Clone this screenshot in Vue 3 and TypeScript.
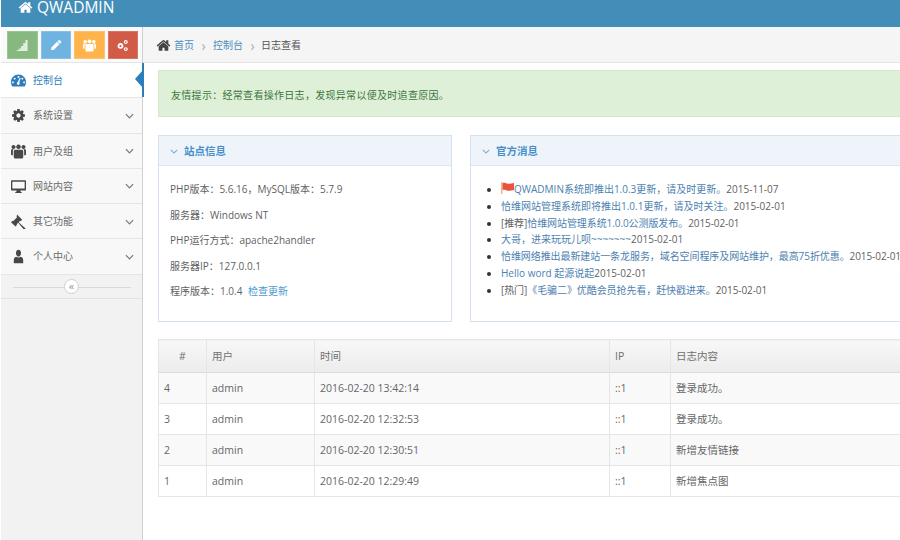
<script setup lang="ts">
// 图标路径（单一 path，靠 evenodd 挖空）
const icons: Record<string, string> = {
  home: 'M1472 992v480q0 26-19 45t-45 19h-384v-384h-256v384h-384q-26 0-45-19t-19-45v-480q0-1 .5-3t.5-3l575-474 575 474q1 2 1 6zm223-69l-62 74q-8 9-21 11h-3q-13 0-21-7l-692-577-692 577q-12 8-24 7-13-2-21-11l-62-74q-8-10-7-23.500t11-21.500l719-599q32-26 76-26t76 26l244 204v-195q0-14 9-23t23-9h192q14 0 23 9t9 23v408l219 182q10 8 11 21.500t-7 23.500z',
  dash: 'M896 190C400 190 0 590 0 1090c0 210 50 390 150 520h1492c100-130 150-310 150-520 0-500-400-900-896-900zM896 360a110 110 0 1 0 .1 0zM440 560a110 110 0 1 0 .1 0zM1352 560a110 110 0 1 0 .1 0zM230 1010a110 110 0 1 0 .1 0zM1562 1010a110 110 0 1 0 .1 0zM1160 640L980 1110a170 170 0 1 1-170-30l220-480z',
  cog: 'M1152 896q0-106-75-181t-181-75-181 75-75 181 75 181 181 75 181-75 75-181zm512-109v222q0 12-8 23t-20 13l-185 28q-19 54-39 91 35 50 107 138 10 12 10 25t-9 23q-27 37-99 108t-94 71q-12 0-26-9l-138-108q-44 23-91 38-16 136-29 186-7 28-36 28h-222q-14 0-24.500-8.500t-11.500-21.500l-28-184q-49-16-90-37l-141 107q-10 9-25 9-14 0-25-11-126-114-165-168-7-10-7-23 0-12 8-23 15-21 51-66.500t54-70.500q-27-50-41-99l-183-27q-13-2-21-12.500t-8-23.500v-222q0-12 8-23t19-13l186-28q14-46 39-92-40-57-107-138-10-12-10-24 0-10 9-23 26-36 98.500-107.500t94.500-71.500q13 0 26 10l138 107q44-23 91-38 16-136 29-186 7-28 36-28h222q14 0 24.500 8.500t11.500 21.500l28 184q49 16 90 37l142-107q9-9 24-9 13 0 25 10 129 119 165 170 7 8 7 22 0 12-8 23-15 21-51 66.500t-54 70.500q26 50 41 98l183 28q13 2 21 12.500t8 23.500z',
  users: 'M896 60a270 270 0 1 0 .1 0zM300 130a240 240 0 1 0 .1 0zM1492 130a240 240 0 1 0 .1 0zM500 680h792c110 0 170 90 170 220v640c0 100-60 190-170 190H500c-110 0-170-90-170-190V900c0-130 60-220 170-220zM0 870c0-160 70-260 190-260h120c-50 70-90 160-90 290v430H90c-50 0-90-40-90-90zM1792 870c0-160-70-260-190-260h-120c50 70 90 160 90 290v430h130c50 0 90-40 90-90z',
  desktop: 'M112 160h1568c60 0 112 50 112 110v1000c0 60-52 110-112 110h-560q0 90 64 180h96v112H512v-112h96q64-90 64-180H112c-60 0-112-50-112-110V270c0-60 52-110 112-110zM160 320v800h1472V320z',
  gavel: 'M720 60l620 620-190 190-60-60-180 180 800 700q40 40 0 90l-80 80q-50 40-90 0L860 1040l-190 190 60 60-190 190L0 1000l190-190 60 60 480-480-60-60z',
  user: 'M896 100c190 0 300 170 300 380s-120 430-300 430-300-220-300-430 110-380 300-380zM336 1690v-330c0-220 80-340 280-420 70 60 170 90 280 90s210-30 280-90c200 80 280 200 280 420v330z',
  signal: 'M100 1500h300v-200h300v-350h300V550h300V150h300v1500H100z',
  pencil: 'M1300 190q50-50 110-50t110 50l120 120q50 50 50 110t-50 110l-130 130-340-340zM1100 390l340 340-800 800H300v-340z',
  cogs: 'M620 560a400 400 0 1 0 .1 0zM620 810a150 150 0 1 1-.1 0zM1350 150a270 270 0 1 0 .1 0zM1350 320a100 100 0 1 1-.1 0zM1350 1120a270 270 0 1 0 .1 0zM1350 1290a100 100 0 1 1-.1 0z',
}

interface NavItem {
  label: string
  icon: string
  active?: boolean
}

const shortcuts = [
  { icon: 'signal', cls: 'green' },
  { icon: 'pencil', cls: 'blue' },
  { icon: 'users', cls: 'orange' },
  { icon: 'cogs', cls: 'red' },
]

const navItems: NavItem[] = [
  { label: '控制台', icon: 'dash', active: true },
  { label: '系统设置', icon: 'cog' },
  { label: '用户及组', icon: 'users' },
  { label: '网站内容', icon: 'desktop' },
  { label: '其它功能', icon: 'gavel' },
  { label: '个人中心', icon: 'user' },
]

const siteInfo = [
  'PHP版本：5.6.16，MySQL版本：5.7.9',
  '服务器：Windows NT',
  'PHP运行方式：apache2handler',
  '服务器IP：127.0.0.1',
]

const news = [
  { tag: '', flag: true, title: 'QWADMIN系统即推出1.0.3更新，请及时更新。', date: '2015-11-07' },
  { tag: '', title: '恰维网站管理系统即将推出1.0.1更新，请及时关注。', date: '2015-02-01' },
  { tag: '[推荐]', tight: true, title: '恰维网站管理系统1.0.0公测版发布。', date: '2015-02-01' },
  { tag: '', title: '大哥，进来玩玩儿呗~~~~~~~', date: '2015-02-01' },
  { tag: '', tight: true, title: '恰维网络推出最新建站一条龙服务，域名空间程序及网站维护，最高75折优惠。', date: '2015-02-01' },
  { tag: '', title: 'Hello word 起源说起', date: '2015-02-01' },
  { tag: '[热门]', tight: true, title: '《毛骗二》优酷会员抢先看，赶快戳进来。', date: '2015-02-01' },
]

const logs = [
  { id: 4, user: 'admin', time: '2016-02-20 13:42:14', ip: '::1', text: '登录成功。' },
  { id: 3, user: 'admin', time: '2016-02-20 12:32:53', ip: '::1', text: '登录成功。' },
  { id: 2, user: 'admin', time: '2016-02-20 12:30:51', ip: '::1', text: '新增友情链接' },
  { id: 1, user: 'admin', time: '2016-02-20 12:29:49', ip: '::1', text: '新增焦点图' },
]
</script>

<template>
  <div class="page">
    <header class="navbar">
      <svg class="brand-icon" viewBox="0 0 1792 1792"><path :d="icons.home" /></svg>
      <span>QWADMIN</span>
    </header>

    <div class="layout">
      <aside class="sidebar">
        <div class="shortcuts">
          <button v-for="s in shortcuts" :key="s.icon" class="shortcut" :class="s.cls">
            <svg viewBox="0 0 1792 1792"><path :d="icons[s.icon]" fill-rule="evenodd" /></svg>
          </button>
        </div>
        <ul class="nav">
          <li v-for="item in navItems" :key="item.label" :class="{ active: item.active }">
            <svg class="nav-icon" viewBox="0 0 1792 1792"><path :d="icons[item.icon]" fill-rule="evenodd" /></svg>
            <span class="nav-label">{{ item.label }}</span>
            <svg v-if="!item.active" class="nav-arrow" viewBox="0 0 10 6"><path d="M1 1l4 4 4-4" /></svg>
          </li>
        </ul>
        <div class="collapse">
          <span class="collapse-btn">«</span>
        </div>
      </aside>

      <main class="main">
        <div class="breadcrumbs">
          <svg class="crumb-home" viewBox="0 0 1792 1792"><path :d="icons.home" /></svg>
          <a>首页</a>
          <span class="sep">›</span>
          <a>控制台</a>
          <span class="sep">›</span>
          <span class="current">日志查看</span>
        </div>

        <div class="content">
          <div class="alert">友情提示：经常查看操作日志，发现异常以便及时追查原因。</div>

          <div class="panels">
            <section class="panel">
              <h4 class="panel-title">
                <svg class="panel-arrow" viewBox="0 0 10 6"><path d="M1 1l4 4 4-4" /></svg>
                站点信息
              </h4>
              <div class="panel-body">
                <p v-for="line in siteInfo" :key="line">{{ line }}</p>
                <p>程序版本：1.0.4 <a class="check">检查更新</a></p>
              </div>
            </section>

            <section class="panel">
              <h4 class="panel-title">
                <svg class="panel-arrow" viewBox="0 0 10 6"><path d="M1 1l4 4 4-4" /></svg>
                官方消息
              </h4>
              <div class="panel-body">
                <ul class="news">
                  <li v-for="n in news" :key="n.title" :class="{ tight: n.tight }">
                    {{ n.tag }}<svg v-if="n.flag" class="flag" viewBox="0 0 13 12"><rect width="1.500" height="12" fill="#f5b58c" /><path d="M1.500 1c3-1 4 .8 6 .8 2 0 3.500-.6 5.500-.8v7c-2 .2-3.500.8-5.500.8-2 0-3-1.800-6-.8z" fill="#e8553a" /></svg><a>{{ n.title }}</a>{{ n.date }}
                  </li>
                </ul>
              </div>
            </section>
          </div>

          <table class="log-table">
            <colgroup>
              <col class="col-id" />
              <col class="col-user" />
              <col class="col-time" />
              <col class="col-ip" />
              <col />
            </colgroup>
            <thead>
              <tr>
                <th class="center">#</th>
                <th>用户</th>
                <th>时间</th>
                <th>IP</th>
                <th>日志内容</th>
              </tr>
            </thead>
            <tbody>
              <tr v-for="log in logs" :key="log.id">
                <td>{{ log.id }}</td>
                <td>{{ log.user }}</td>
                <td>{{ log.time }}</td>
                <td>{{ log.ip }}</td>
                <td>{{ log.text }}</td>
              </tr>
            </tbody>
          </table>
        </div>
      </main>
    </div>
  </div>
</template>

<style>
html,
body {
  margin: 0;
  background: #fff;
  overflow: hidden;
}
</style>

<style scoped>
.page {
  width: 900px;
  height: 540px;
  overflow: hidden;
  display: flex;
  flex-direction: column;
  font-family: "Open Sans", "Noto Sans CJK SC", sans-serif;
  font-size: 10px;
  line-height: 17px;
  color: #5f5f5f;
}

/* 顶部栏，上半截被裁掉了 */
.navbar {
  height: 27px;
  flex: none;
  margin-left: 1px;
  padding-left: 17px;
  box-sizing: border-box;
  background: #438eb9;
  color: #fff;
  font-size: 15.500px;
  line-height: 14px;
  display: flex;
  align-items: flex-start;
  gap: 4px;
}

.brand-icon {
  width: 15px;
  height: 15px;
  fill: #fff;
}

.layout {
  flex: 1;
  display: flex;
  margin-left: 1px;
  min-height: 0;
}

/* 侧边栏 */
.sidebar {
  width: 142px;
  flex: none;
  box-sizing: border-box;
  background: #f2f2f2;
  border-right: 1px solid #cfcfcf;
}

.shortcuts {
  height: 36px;
  box-sizing: border-box;
  padding: 4px 4px 3px 6px;
  display: grid;
  grid-template-columns: repeat(4, 1fr);
  gap: 3px;
  background: #fafafa;
  border-bottom: 1px solid #e5e5e5;
}

.shortcut {
  padding: 0;
  border: 1px solid;
  display: flex;
  align-items: center;
  justify-content: center;
}

.shortcut svg {
  width: 13px;
  height: 13px;
  fill: #fff;
}

.shortcut.green svg {
  opacity: 0.75;
}

.green { background: #87b87f; border-color: #9cc595; }
.blue { background: #6fb3e0; border-color: #86c0e6; }
.orange { background: #ffb44b; border-color: #ffc069; }
.red { background: #d15b47; border-color: #d97565; }

.nav {
  list-style: none;
  margin: 0;
  padding: 0;
}

.nav li {
  height: 35.250px;
  box-sizing: border-box;
  position: relative;
  display: flex;
  align-items: center;
  padding: 1px 0 0 10px;
  background: #f8f8f8;
  border-bottom: 1px solid #e5e5e5;
  color: #6a6a6a;
}

.nav li.active {
  background: #fff;
  color: #2b7dbc;
}

/* 当前项右侧的蓝色小箭头 */
.nav li.active::before {
  content: "";
  position: absolute;
  top: 0;
  bottom: 0;
  right: -2px;
  width: 2px;
  background: #2b7dbc;
}

.nav li.active::after {
  content: "";
  position: absolute;
  right: -1px;
  top: 7px;
  border: 9px solid transparent;
  border-left-width: 0;
  border-right: 8px solid #2b7dbc;
}

.nav-icon {
  width: 15px;
  height: 15px;
  flex: none;
  fill: #484848;
}

.active .nav-icon {
  fill: #2b7dbc;
}

.nav-label {
  margin-left: 7px;
  flex: 1;
}

.nav-arrow {
  width: 9px;
  height: 6px;
  margin-right: 8px;
  fill: none;
  stroke: #777;
  stroke-width: 1.300;
}

.collapse {
  height: 24px;
  box-sizing: border-box;
  position: relative;
  border-bottom: 1px solid #e2e2e2;
  display: flex;
  align-items: center;
  justify-content: center;
}

.collapse::before {
  content: "";
  position: absolute;
  left: 12px;
  right: 11px;
  top: 12px;
  border-top: 1px solid #d9d9d9;
}

.collapse-btn {
  position: relative;
  width: 13px;
  height: 13px;
  border: 1px solid #d0d0d0;
  border-radius: 50%;
  background: #fff;
  color: #999;
  font-size: 11px;
  line-height: 11px;
  text-align: center;
}

/* 主内容 */
.main {
  flex: 1;
  min-width: 0;
}

.breadcrumbs {
  height: 36px;
  box-sizing: border-box;
  background: #f5f5f5;
  border-bottom: 1px solid #e5e5e5;
  padding: 2px 0 0 13px;
  display: flex;
  align-items: center;
  color: #555;
}

.crumb-home {
  width: 15px;
  height: 15px;
  fill: #444;
  margin-right: 3px;
}

.breadcrumbs a {
  color: #4c8fbd;
}

.sep {
  width: 19px;
  text-align: center;
  color: #aaa;
  font-size: 14px;
}

.current {
  margin-left: -1px;
}

.content {
  width: 790px;
  padding: 7px 0 0 15px;
}

.alert {
  height: 47px;
  box-sizing: border-box;
  padding: 3px 12px 0;
  display: flex;
  align-items: center;
  background: #dff0d8;
  border: 1px solid #d6e9c6;
  color: #3c763d;
  letter-spacing: 0.3px;
}

.panels {
  margin-top: 18px;
  display: grid;
  grid-template-columns: 294px 1fr;
  gap: 18px;
}

.panel {
  height: 187px;
  box-sizing: border-box;
  border: 1px solid #d5e1ef;
  background: #fff;
}

.panel-title {
  margin: 0;
  height: 30px;
  box-sizing: border-box;
  padding: 2px 0 0 11px;
  display: flex;
  align-items: center;
  gap: 6px;
  background: #eff4fb;
  border-bottom: 1px solid #dce8f1;
  color: #478fca;
  font-size: 10.500px;
  font-weight: 700;
}

.panel-arrow {
  width: 8px;
  height: 5px;
  fill: none;
  stroke: #7aa9cc;
  stroke-width: 1.300;
}

.panel-body {
  padding: 15px 11px 0;
}

.panel-body p {
  margin: 0 0 8.500px;
}

a {
  color: #4c8fbd;
}

.check {
  margin-left: 3px;
  color: #4c9ad0;
}

.news {
  margin: 0;
  padding: 0 0 0 19px;
  white-space: nowrap;
}

.news a {
  color: #4c7fb0;
}

.news li {
  line-height: 16.800px;
}

.news li.tight {
  letter-spacing: -0.08px;
}

.news li::marker {
  color: #333;
}

.flag {
  width: 13px;
  height: 12px;
  vertical-align: -1px;
}

/* 日志表格 */
.log-table {
  margin-top: 17px;
  width: 100%;
  table-layout: fixed;
  border-collapse: collapse;
  border: 1px solid #ddd;
  font-size: 10.500px;
}

.col-id { width: 48px; }
.col-user { width: 108px; }
.col-time { width: 295px; }
.col-ip { width: 61px; }

.log-table th,
.log-table td {
  height: 31px;
  box-sizing: border-box;
  padding: 0 5px;
  text-align: left;
  border: 1px solid #e6e6e6;
  font-weight: 400;
  color: #666;
}

.log-table th {
  height: 33px;
  background: linear-gradient(#f8f8f8, #ececec);
  border-bottom-color: #ddd;
  color: #707070;
}

.log-table th.center {
  text-align: center;
}

.log-table tbody tr:nth-child(odd) td {
  background: #f9f9f9;
}
</style>
